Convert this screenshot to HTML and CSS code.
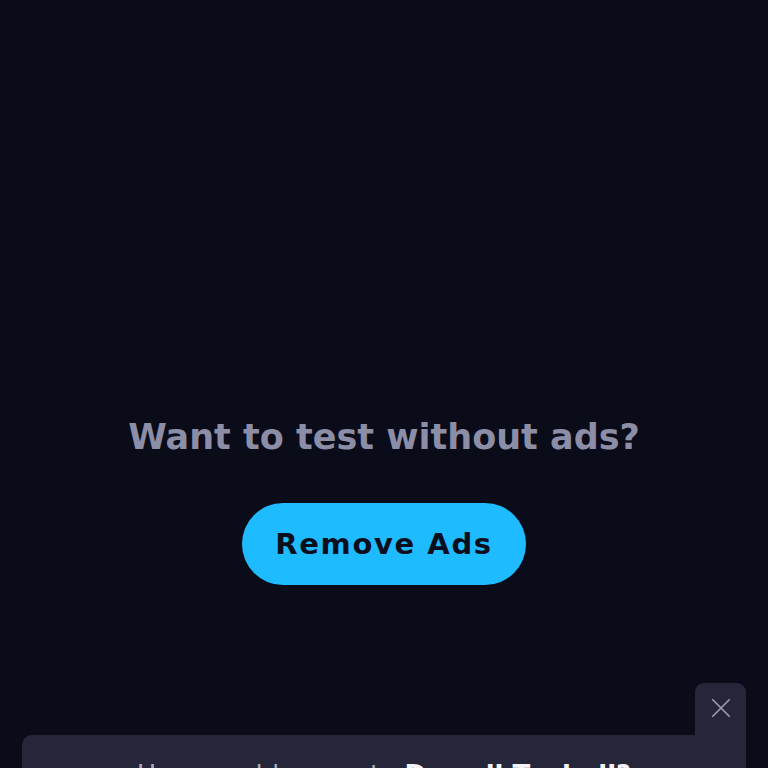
FILE: index.html
```html
<!DOCTYPE html>
<html>
<head>
<meta charset="utf-8">
<link rel="stylesheet" href="styles.css">
</head>
<body>
<main class="page">
  <section class="promo">
    <h1 class="promo-title">Want to test without ads?</h1>
    <button class="promo-btn">Remove Ads</button>
  </section>
  <aside class="sheet">
    <div class="sheet-tab">
      <svg class="close-icon" viewBox="0 0 24 24" width="24" height="24">
        <path d="M3 3 L21 21 M21 3 L3 21" stroke="#9c9db3" stroke-width="1.8" stroke-linecap="round" fill="none"/>
      </svg>
    </div>
    <div class="sheet-card">
      <p class="sheet-text">How would you rate <b>Dowell Teabell?</b></p>
    </div>
  </aside>
</main>
</body>
</html>
```
FILE: styles.css
```css
html, body {
  margin: 0;
  padding: 0;
  background: #0a0c19;
}
.page {
  position: relative;
  width: 768px;
  height: 768px;
  overflow: hidden;
  background: #0a0c19;
  font-family: "DejaVu Sans", sans-serif;
}
.promo {
  display: flex;
  flex-direction: column;
  align-items: center;
  padding-top: 414px;
}
.promo-title {
  margin: 0;
  font-size: 35px;
  font-weight: 700;
  color: #8c8da6;
  line-height: 46px;
}
.promo-btn {
  margin-top: 43px;
  width: 284px;
  height: 82px;
  border: none;
  border-radius: 41px;
  background: #1fbbff;
  color: #0b0f1d;
  font-family: "DejaVu Sans", sans-serif;
  font-size: 29px;
  font-weight: 700;
  letter-spacing: 1.6px;
  padding: 0;
}
.sheet {
  position: absolute;
  left: 22px;
  right: 22px;
  top: 683px;
  display: flex;
  flex-direction: column;
  align-items: flex-end;
}
.sheet-tab {
  width: 51px;
  height: 52px;
  background: #25263a;
  border-radius: 9px 9px 0 0;
  display: flex;
  justify-content: center;
  padding-top: 14px;
  box-sizing: border-box;
}
.close-icon {
  width: 22px;
  height: 22px;
}
.sheet-card {
  align-self: stretch;
  height: 120px;
  background: #25263a;
  border-radius: 10px 0 0 0;
}
.sheet-text {
  margin: 0;
  padding-top: 25px;
  text-align: center;
  font-size: 26px;
  color: #a9aabd;
  font-weight: 400;
}
.sheet-text b {
  color: #f2f2f7;
  font-weight: 700;
}
```
